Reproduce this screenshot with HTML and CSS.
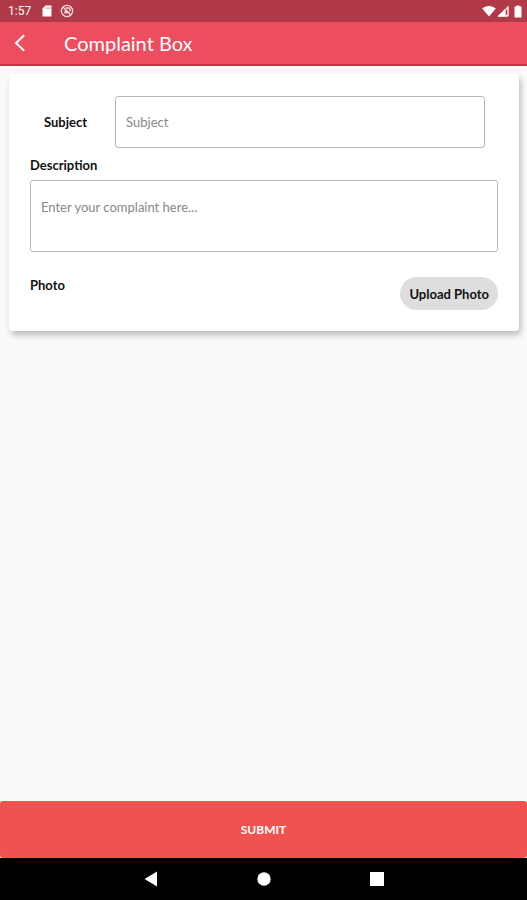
FILE: index.html
```html
<!DOCTYPE html>
<html lang="en">
<head>
    <meta charset="UTF-8">
    <meta name="viewport" content="width=device-width, initial-scale=1.0">
    <title>Complaint Box</title>
    <link rel="stylesheet" href="styles.css">
</head>
<body>
    <div class="status-bar">
        <span class="time">1:57</span>
        <svg class="sd-icon" width="10" height="12" viewBox="0 0 10 12">
            <path d="M3.5 0.5H9.5V11.5H0.5V3.5z" fill="#fff"/>
            <path d="M4 2v2M6 2v2M8 2v2" stroke="#b03a48" stroke-width="0.6"/>
        </svg>
        <svg width="14" height="14" viewBox="0 0 14 14" fill="none" stroke="#f6dde0">
            <circle cx="7" cy="7" r="5.6" stroke-width="1.3"/>
            <path d="M3 3l8 8M5 9.5V6.5M6 4h2.5a2 2 0 0 1 1 3.4M7.5 9.5L5.5 7.5" stroke-width="1.3"/>
        </svg>
        <div class="status-right">
            <svg width="14" height="12" viewBox="0 0 14 12">
                <path d="M0.2 3.5C4 0 10 0 13.8 3.5L7 11.5z" fill="#fff"/>
            </svg>
            <svg width="12" height="12" viewBox="0 0 12 12">
                <path d="M11.5 0.5V11.5H0.5z" fill="#e5bec2"/>
                <path d="M8 4V11.5H0.5z" fill="#fff"/>
                <path d="M9 5h1.6v4.5H9z" fill="#b03a48"/>
                <path d="M1.5 11h9.5V1.5" fill="none" stroke="#fff"/>
            </svg>
            <svg class="battery-icon" width="8" height="13" viewBox="0 0 8 13">
                <path d="M2.5 0.5h3v1H7.5V12.5H0.5V1.5h2z" fill="#fff"/>
            </svg>
        </div>
    </div>

    <header class="app-bar">
        <button type="button" class="back" aria-label="Back">
            <svg width="12" height="18" viewBox="0 0 12 18">
                <path d="M10.2 1.2L2 9l8.2 7.8" fill="none" stroke="#fff" stroke-width="2"/>
            </svg>
        </button>
        <h1>Complaint Box</h1>
    </header>

    <form class="page" id="complaint">
        <div class="card">
            <div class="subject-row">
                <label for="subject">Subject</label>
                <input type="text" id="subject" placeholder="Subject">
            </div>

            <label class="description-label" for="description">Description</label>
            <textarea id="description" placeholder="Enter your complaint here..."></textarea>

            <div class="photo-row">
                <span id="photo-label">Photo</span>
                <button type="button" class="upload">Upload Photo</button>
            </div>
        </div>
    </form>

    <button type="submit" form="complaint" class="submit">SUBMIT</button>

    <nav class="nav-bar">
        <button type="button" aria-label="Back">
            <svg width="14" height="16" viewBox="0 0 14 16"><path d="M0.5 8L13 0.5V15.5z" fill="#fff"/></svg>
        </button>
        <button type="button" aria-label="Home">
            <svg width="14" height="14" viewBox="0 0 14 14"><circle cx="7" cy="7" r="6.7" fill="#fff"/></svg>
        </button>
        <button type="button" aria-label="Recent apps">
            <svg width="14" height="14" viewBox="0 0 14 14"><path d="M0 0h14v14H0z" fill="#fff"/></svg>
        </button>
    </nav>
</body>
</html>
```

FILE: styles.css
```css
* {
    box-sizing: border-box;
}

body {
    font-family: Lato, "Open Sans", sans-serif;
    background-color: #fafafa;
    color: #111;
    margin: 0;
    min-height: 100vh;
    display: flex;
    flex-direction: column;
}

svg {
    display: block;
}

button {
    font-family: inherit;
    border: none;
    padding: 0;
    background: none;
    cursor: pointer;
}

.status-bar {
    display: flex;
    align-items: center;
    height: 22px;
    padding: 0 5px 0 8px;
    background: #b03a48;
    color: white;
}

.time {
    font-family: Roboto, sans-serif;
    font-size: 12px;
}

.sd-icon {
    margin: 0 8px 0 11px;
}

.status-right {
    display: flex;
    align-items: center;
    gap: 1px;
    margin-left: auto;
}

.battery-icon {
    margin-left: 4px;
}

.app-bar {
    display: flex;
    align-items: center;
    height: 44px;
    padding-left: 14px;
    background: #ec4d5f;
    border-bottom: 2px solid #d03047;
    color: white;
}

h1 {
    margin: 0 0 0 38px;
    font-size: 20px;
    line-height: 24px;
    font-weight: 400;
}

.page {
    flex: 1;
    padding: 8px 8px 8px 9px;
}

.card {
    background: white;
    border-radius: 4px;
    box-shadow: 2px 4px 6px rgba(0, 0, 0, 0.25);
    padding: 22px 21px 21px;
}

label,
#photo-label {
    font-size: 13px;
    line-height: 16px;
    font-weight: 700;
}

.subject-row {
    display: flex;
    align-items: center;
    gap: 28px;
    padding: 0 13px 0 14px;
}

input,
textarea {
    font-family: inherit;
    font-size: 13px;
    line-height: 16px;
    color: #111;
    background: white;
    border: 1px solid #b8b8b8;
    border-radius: 3px;
    padding: 0 10px;
}

input {
    flex: 1;
    min-width: 0;
    height: 52px;
}

::placeholder {
    color: #888;
    opacity: 1;
}

.description-label {
    display: block;
    margin: 9px 0 7px;
}

textarea {
    display: block;
    width: 100%;
    height: 72px;
    padding-top: 18px;
    resize: none;
}

.photo-row {
    display: flex;
    justify-content: space-between;
    align-items: flex-start;
    margin-top: 25px;
}

.upload {
    height: 33px;
    padding: 0 9px;
    border-radius: 17px;
    background: #dedede;
    color: #111;
    font-size: 13px;
    font-weight: 700;
}

.submit {
    height: 57px;
    border-radius: 3px;
    background: #ef5350;
    color: white;
    font-size: 12px;
    font-weight: 700;
}

.nav-bar {
    display: flex;
    justify-content: center;
    align-items: center;
    gap: 99px;
    height: 42px;
    background: black;
}
```
